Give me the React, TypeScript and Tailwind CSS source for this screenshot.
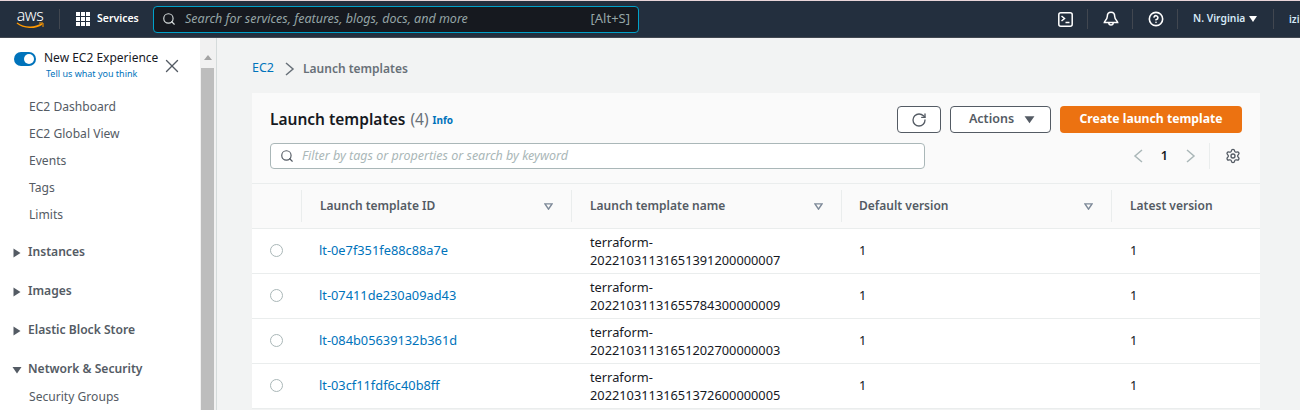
import { Search, RotateCw, Settings, X, CircleHelp } from 'lucide-react';

const font = "font-['Noto_Sans','Liberation_Sans',sans-serif]";

const rows = [
  { id: 'lt-0e7f351fe88c88a7e', name: '20221031131651391200000007' },
  { id: 'lt-07411de230a09ad43', name: '20221031131655784300000009' },
  { id: 'lt-084b05639132b361d', name: '20221031131651202700000003' },
  { id: 'lt-03cf11fdf6c40b8ff', name: '20221031131651372600000005' },
];

const Caret = ({ open, size = 10 }: { open?: boolean; size?: number }) => (
  <svg width={size} height={size} viewBox="0 0 10 10" className="shrink-0 text-[#545b64]" fill="currentColor">
    {open ? <path d="M0.5 2h9L5 8.5z" /> : <path d="M1.5 0.5l7 4.5-7 4.5z" />}
  </svg>
);

const Chevron = ({ left, className }: { left?: boolean; className: string }) => (
  <svg width="10" height="14" viewBox="0 0 10 14" fill="none" stroke="currentColor" strokeWidth="1.5" className={`shrink-0 ${className}`}>
    <path d={left ? 'M9 1L2 7l7 6' : 'M1 1l7 6-7 6'} />
  </svg>
);

const SortIcon = () => (
  <svg width="9" height="7" viewBox="0 0 10 8" fill="none" stroke="#7d8998" strokeWidth="1.6">
    <path d="M1 1h8L5 7z" />
  </svg>
);

const Divider = () => <div className="h-5 w-px shrink-0 bg-[#414750]" />;

const TerminalIcon = () => (
  <svg width="15" height="15" viewBox="0 0 15 15" fill="none" stroke="white" strokeWidth="1.5" className="ml-[419px] shrink-0">
    <rect x="0.8" y="0.8" width="13.4" height="13.4" rx="2" />
    <path d="M3.5 4l3 2.5-3 2.5M7.5 10.5h4" />
  </svg>
);

const BellIcon = () => (
  <svg width="16" height="16" viewBox="0 0 16 16" fill="none" stroke="white" strokeWidth="1.5" className="ml-[15px] shrink-0">
    <path d="M8 1.2c-2.6 0-3.7 2-3.7 4.2 0 2.7-2.8 4.8-3 6.1h13.4c-.2-1.3-3-3.4-3-6.1 0-2.2-1.1-4.2-3.7-4.2z" />
    <path d="M5.8 11.8c0 3 4.4 3 4.4 0" />
  </svg>
);

const TopBar = () => (
  <header className="flex h-[38px] shrink-0 items-center border-y border-t-[#e8d5d8] border-b-[#414750] bg-[#232f3e] text-white">
    <div className="ml-4 flex w-[28px] shrink-0 flex-col items-center">
      <span className="text-[16px] font-light leading-[13px] tracking-tight">aws</span>
      <svg width="28" height="7" viewBox="0 0 28 7" fill="none">
        <path d="M1 1c7 5.500 18 5.500 25 1" stroke="#ff9900" strokeWidth="1.5" />
        <path d="M23 1h4v4" stroke="#ff9900" strokeWidth="1" />
      </svg>
    </div>
    <div className="ml-[15px]"><Divider /></div>
    <div className="ml-[16px] grid h-[14px] w-[14px] shrink-0 grid-cols-3 gap-px">
      {Array.from({ length: 9 }).map((_, i) => (
        <span key={i} className="bg-white" />
      ))}
    </div>
    <span className="ml-[7px] w-[56px] shrink-0 text-[10.5px] font-semibold">Services</span>
    <div className="flex h-[27px] w-[486px] shrink-0 items-center rounded-sm border border-[#00a1c9] bg-[#16191f] px-2">
      <Search size={14} className="shrink-0 text-[#d5dbdb]" />
      <span className="ml-[9px] text-[12.5px] italic text-[#95a5a6]">Search for services, features, blogs, docs, and more</span>
      <span className="ml-auto text-[13px] text-[#95a5a6]">[Alt+S]</span>
    </div>
    <TerminalIcon />
    <div className="ml-[14px]"><Divider /></div>
    <BellIcon />
    <div className="ml-[13px]"><Divider /></div>
    <CircleHelp size={16} strokeWidth={2.4} className="ml-[15px] shrink-0" />
    <div className="ml-[13px]"><Divider /></div>
    <span className="ml-[15px] w-[56px] shrink-0 whitespace-nowrap text-[10.3px] font-semibold text-[#d5e9f7]">N. Virginia</span>
    <svg width="8" height="6" viewBox="0 0 8 6" className="shrink-0" fill="white"><path d="M0 0h8L4 6z" /></svg>
    <div className="ml-[16px]"><Divider /></div>
    <span className="ml-[15px] shrink-0 text-[10px] font-semibold text-[#d5e9f7]">izi</span>
  </header>
);

const NavLink = ({ label }: { label: string }) => (
  <div className="flex h-[27px] items-center pl-[29px] text-[12.1px] text-[#545b64]">{label}</div>
);

const NavGroup = ({ label, open }: { label: string; open?: boolean }) => (
  <div className="flex h-[39px] items-center gap-[6px] pl-3 text-[12.1px] font-semibold text-[#545b64]">
    <Caret open={open} />
    <span>{label}</span>
  </div>
);

const Sidebar = () => (
  <aside className="flex w-[217px] shrink-0 border-r border-[#d5dbdb] bg-white">
    <div className="w-[200px] shrink-0 overflow-hidden">
      <div className="flex h-[57px] items-start pl-[14px] pt-[11px]">
        <div className="mt-[3px] flex h-[14px] w-[22px] shrink-0 items-center justify-end rounded-full bg-[#0073bb] pr-[2px]">
          <span className="h-[10px] w-[10px] rounded-full bg-white" />
        </div>
        <div className="ml-2 flex flex-col">
          <span className="whitespace-nowrap text-[12px] leading-[18px] text-[#16191f]">New EC2 Experience</span>
          <span className="ml-[2px] whitespace-nowrap text-[9px] leading-[14px] text-[#0073bb]">Tell us what you think</span>
        </div>
        <X size={22} strokeWidth={1.5} className="ml-[3px] mt-[6px] shrink-0 text-[#545b64]" />
      </div>
      <div className="-mt-[1px]">
        {['EC2 Dashboard', 'EC2 Global View', 'Events', 'Tags', 'Limits'].map((l) => (
          <NavLink key={l} label={l} />
        ))}
      </div>
      <div className="mt-[4px]">
        <NavGroup label="Instances" />
        <NavGroup label="Images" />
        <NavGroup label="Elastic Block Store" />
        <NavGroup label="Network & Security" open />
      </div>
      <div className="-mt-[5px]"><NavLink label="Security Groups" /></div>
    </div>
    <div className="flex w-[16px] flex-col items-center bg-[#f1f1f1] pl-[1px] pr-[2px]">
      <svg width="8" height="5" viewBox="0 0 8 5" className="mt-[17px] shrink-0" fill="#a3a3a3"><path d="M4 0l4 5H0z" /></svg>
      <div className="mt-[8px] w-full flex-1 bg-[#bdbdbd]" />
    </div>
  </aside>
);

const Th = ({ label, sort, w, pad = 'pl-[18px]' }: { label: string; sort?: boolean; w: string; pad?: string }) => (
  <div className={`flex h-[32px] items-center justify-between border-l border-[#eaeded] pr-[18px] ${pad} ${w}`}>
    <span className="text-[12px] font-semibold text-[#545b64]">{label}</span>
    {sort && <SortIcon />}
  </div>
);

const Row = ({ id, name }: { id: string; name: string }) => (
  <div className="flex h-[45px] items-center border-b border-[#eaeded] bg-white text-[12.8px]">
    <div className="flex w-[67px] pb-[2px] pl-[18px]">
      <span className="h-[13px] w-[13px] rounded-full border border-[#aab7b8] bg-white" />
    </div>
    <div className="w-[271px] text-[#0073bb]">{id}</div>
    <div className="w-[269px] leading-[18px] text-[#16191f]">
      terraform-
      <br />
      {name}
    </div>
    <div className="w-[271px] text-[#16191f]">1</div>
    <div className="text-[#16191f]">1</div>
  </div>
);

const Card = () => (
  <section className="w-[1008px] bg-[#fafafa]">
    <div className="border-b border-[#eaeded] px-[18px] pt-[13px]">
      <div className="flex items-center">
        <h1 className="text-[15.5px] font-semibold text-[#16191f]">Launch templates</h1>
        <span className="ml-[5px] text-[15.5px] text-[#687078]">(4)</span>
        <span className="ml-1 mt-[2px] text-[10px] font-bold text-[#0073bb]">Info</span>
        <div className="ml-auto flex items-center gap-[9px]">
          <button className="flex h-[27px] w-[44px] items-center justify-center rounded-sm border border-[#545b64] bg-white">
            <RotateCw size={16} className="text-[#545b64]" />
          </button>
          <button className="flex h-[27px] w-[101px] items-center justify-center gap-[10px] rounded-sm border border-[#545b64] bg-white pl-[3px] text-[12.5px] font-semibold text-[#545b64]">
            Actions
            <Caret open size={11} />
          </button>
          <button className="h-[27px] w-[182px] rounded-sm bg-[#ec7211] text-[12.2px] font-bold text-white">
            Create launch template
          </button>
        </div>
      </div>
      <div className="mt-[10px] flex h-[40px] items-start">
        <div className="flex h-[26px] w-[655px] items-center rounded-sm border border-[#aab7b8] bg-white pl-[9px]">
          <Search size={14} className="shrink-0 text-[#545b64]" />
          <span className="ml-2 text-[12.5px] italic text-[#aab7b8]">Filter by tags or properties or search by keyword</span>
        </div>
        <div className="ml-auto flex h-[26px] items-center pr-[1px]">
          <Chevron left className="text-[#aab7b8]" />
          <span className="mx-[18px] text-[12.5px] font-semibold text-[#16191f]">1</span>
          <Chevron className="text-[#aab7b8]" />
          <div className="ml-[13px] h-[26px] w-px bg-[#eaeded]" />
          <Settings size={16} className="ml-[15px] text-[#545b64]" />
        </div>
      </div>
    </div>
    <div className="flex h-[45px] items-center border-b border-[#eaeded] pl-[49px]">
      <Th label="Launch template ID" sort w="w-[270px]" />
      <Th label="Launch template name" sort w="w-[270px]" />
      <Th label="Default version" sort w="w-[270px]" pad="pl-[17px]" />
      <Th label="Latest version" w="w-[149px]" />
    </div>
    {rows.map((r) => (
      <Row key={r.id} id={r.id} name={r.name} />
    ))}
  </section>
);

export default function App() {
  return (
    <div className={`flex h-[410px] w-[1300px] flex-col overflow-hidden bg-[#f2f3f3] ${font}`}>
      <TopBar />
      <div className="flex min-h-0 flex-1">
        <Sidebar />
        <main className="flex-1 pl-[35px]">
          <nav className="flex h-[55px] items-center pt-[6px] text-[12px]">
            <span className="text-[12.5px] text-[#0073bb]">EC2</span>
            <Chevron className="ml-[11px] mr-[8px] text-[#687078]" />
            <span className="font-semibold text-[#687078]">Launch templates</span>
          </nav>
          <Card />
        </main>
      </div>
    </div>
  );
}
